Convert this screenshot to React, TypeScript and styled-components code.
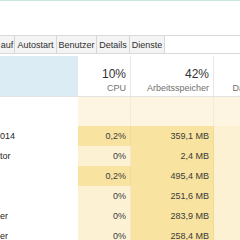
import styled, { createGlobalStyle } from "styled-components";

const GlobalStyle = createGlobalStyle`
  html, body {
    margin: 0;
    padding: 0;
    background: #ffffff;
  }
  body {
    width: 240px;
    height: 240px;
    overflow: hidden;
    font-family: "Segoe UI", "Liberation Sans", Arial, sans-serif;
  }
`;

const COLUMNS = "78px 53px 83px 71px";

const Window = styled.div`
  display: flex;
  flex-direction: column;
  width: 240px;
  height: 240px;
  overflow: hidden;
  background: #ffffff;
`;

const TitleAccent = styled.div`
  height: 1px;
  background: #c9e7dc;
  flex-shrink: 0;
`;

const MenuSpace = styled.div`
  height: 34px;
  flex-shrink: 0;
`;

const TabStrip = styled.div`
  display: flex;
  height: 17px;
  flex-shrink: 0;
  border-top: 1px solid #dadada;
  border-bottom: 1px solid #dadada;
  background: #ffffff;
`;

const Tab = styled.div<{ $w: number }>`
  width: ${(p) => p.$w}px;
  box-sizing: border-box;
  border-right: 1px solid #d6d6d6;
  background: #f4f4f4;
  color: #2f2f2f;
  font-size: 9px;
  line-height: 17px;
  padding-top: 1px;
  text-align: center;
  white-space: nowrap;
  overflow: hidden;
`;

const Table = styled.div`
  display: flex;
  flex-direction: column;
  margin-top: 2px;
`;

const HeaderRow = styled.div`
  display: grid;
  grid-template-columns: ${COLUMNS};
  height: 41px;
  box-sizing: border-box;
  border-bottom: 1px solid #e3e3e3;
`;

const HeaderCell = styled.div<{ $active?: boolean }>`
  display: flex;
  flex-direction: column;
  align-items: flex-end;
  justify-content: flex-end;
  box-sizing: border-box;
  padding: 0 4px 2px 0;
  background: ${(p) => (p.$active ? "#dcecf4" : "#ffffff")};
  border-right: 1px solid ${(p) => (p.$active ? "#dcecf4" : "#e6e6e6")};
  white-space: nowrap;
`;

const HeaderValue = styled.span`
  font-size: 12px;
  line-height: 14px;
  color: #333333;
  margin-bottom: 2px;
`;

const HeaderLabel = styled.span`
  font-size: 9px;
  line-height: 11px;
  color: #707070;
`;

const Row = styled.div<{ $h: number }>`
  display: grid;
  grid-template-columns: ${COLUMNS};
  height: ${(p) => p.$h}px;
  flex-shrink: 0;
`;

type Tone = "plain" | "group" | "light" | "hot";

const toneColor: Record<Tone, string> = {
  plain: "#ffffff",
  group: "#fdf4e1",
  light: "#fdf1d4",
  hot: "#f9e3a0",
};

const Cell = styled.div<{ $tone: Tone }>`
  display: flex;
  align-items: center;
  justify-content: flex-end;
  box-sizing: border-box;
  padding-right: 4px;
  background: ${(p) => toneColor[p.$tone]};
  border-right: 1px solid
    ${(p) => (p.$tone === "plain" ? "#ffffff" : "rgba(160, 130, 40, 0.08)")};
  font-size: 9px;
  color: #3a3a3a;
  white-space: nowrap;
  overflow: hidden;
`;

const NameCell = styled.div`
  display: flex;
  align-items: center;
  font-size: 9px;
  color: #262626;
  white-space: nowrap;
  overflow: hidden;
`;

const tabs = [
  { label: "auf", w: 15 },
  { label: "Autostart", w: 42 },
  { label: "Benutzer", w: 40 },
  { label: "Details", w: 33 },
  { label: "Dienste", w: 35 },
];

const rows = [
  { name: "014", cpu: "0,2%", mem: "359,1 MB", hot: true },
  { name: "tor", cpu: "0%", mem: "2,4 MB", hot: false },
  { name: "", cpu: "0,2%", mem: "495,4 MB", hot: true },
  { name: "", cpu: "0%", mem: "251,6 MB", hot: false },
  { name: "er", cpu: "0%", mem: "283,9 MB", hot: false },
  { name: "er", cpu: "0%", mem: "258,4 MB", hot: false },
];

export default function App() {
  return (
    <Window>
      <GlobalStyle />
      <TitleAccent />
      <MenuSpace />
      <TabStrip>
        {tabs.map((t) => (
          <Tab key={t.label} $w={t.w}>
            {t.label}
          </Tab>
        ))}
      </TabStrip>
      <Table>
        <HeaderRow>
          <HeaderCell $active />
          <HeaderCell>
            <HeaderValue>10%</HeaderValue>
            <HeaderLabel>CPU</HeaderLabel>
          </HeaderCell>
          <HeaderCell>
            <HeaderValue>42%</HeaderValue>
            <HeaderLabel>Arbeitsspeicher</HeaderLabel>
          </HeaderCell>
          <HeaderCell>
            <HeaderLabel>Datenträger</HeaderLabel>
          </HeaderCell>
        </HeaderRow>
        <Row $h={29}>
          <NameCell />
          <Cell $tone="group" />
          <Cell $tone="group" />
          <Cell $tone="group" />
        </Row>
        {rows.map((r, i) => (
          <Row key={i} $h={20}>
            <NameCell>{r.name}</NameCell>
            <Cell $tone={r.hot ? "hot" : "light"}>{r.cpu}</Cell>
            <Cell $tone="hot">{r.mem}</Cell>
            <Cell $tone="light" />
          </Row>
        ))}
      </Table>
    </Window>
  );
}
